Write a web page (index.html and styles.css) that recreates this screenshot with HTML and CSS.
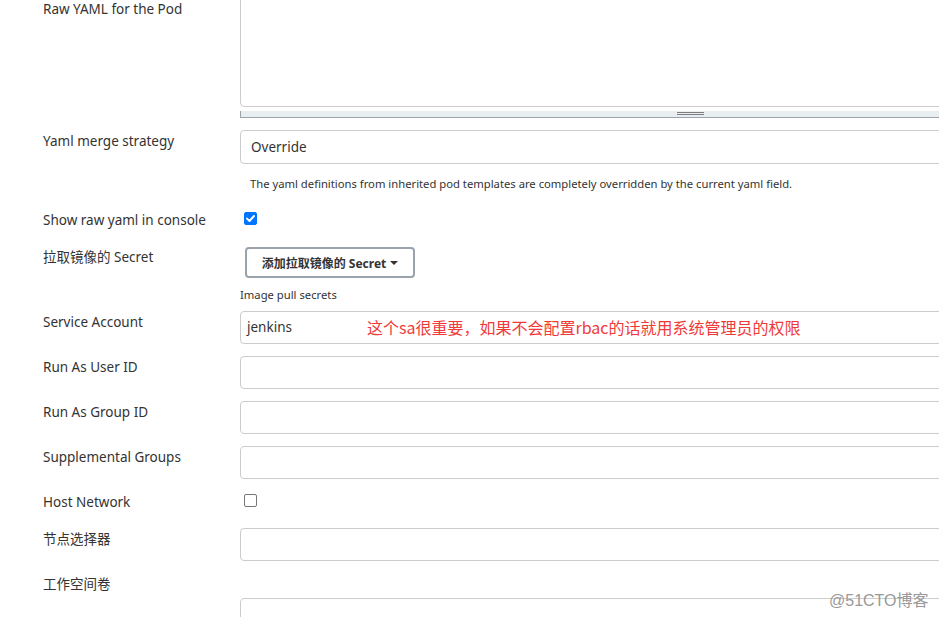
FILE: index.html
```html
<!DOCTYPE html>
<html>
<head>
<meta charset="utf-8">
<link rel="stylesheet" href="styles.css">
</head>
<body>
<div class="form">
  <div class="row row-yaml">
    <div class="label">Raw YAML for the Pod</div>
    <div class="field">
      <div class="ta-clip"><div class="textarea"></div></div>
      <div class="grip"><span class="grip-lines"></span></div>
    </div>
  </div>

  <div class="row row-select">
    <div class="label">Yaml merge strategy</div>
    <div class="field">
      <div class="input select">Override</div>
      <div class="help">The yaml definitions from inherited pod templates are completely overridden by the current yaml field.</div>
    </div>
  </div>

  <div class="row row-check">
    <div class="label">Show raw yaml in console</div>
    <div class="field"><span class="checkbox checked"><svg viewBox="0 0 13 13" width="13" height="13"><path d="M3 6.6 L5.5 9 L10 4" fill="none" stroke="#fff" stroke-width="2" stroke-linecap="round" stroke-linejoin="round"/></svg></span></div>
  </div>

  <div class="row row-secret">
    <div class="label">拉取镜像的 Secret</div>
    <div class="field">
      <div class="btn">添加拉取镜像的 Secret <span class="caret"></span></div>
      <div class="help help-pull">Image pull secrets</div>
    </div>
  </div>

  <div class="row">
    <div class="label">Service Account</div>
    <div class="field"><div class="input">jenkins<span class="note">这个sa很重要，如果不会配置rbac的话就用系统管理员的权限</span></div></div>
  </div>

  <div class="row">
    <div class="label">Run As User ID</div>
    <div class="field"><div class="input"></div></div>
  </div>

  <div class="row">
    <div class="label">Run As Group ID</div>
    <div class="field"><div class="input"></div></div>
  </div>

  <div class="row">
    <div class="label">Supplemental Groups</div>
    <div class="field"><div class="input"></div></div>
  </div>

  <div class="row row-host">
    <div class="label">Host Network</div>
    <div class="field"><span class="checkbox"></span></div>
  </div>

  <div class="row">
    <div class="label">节点选择器</div>
    <div class="field"><div class="input"></div></div>
  </div>

  <div class="row row-last">
    <div class="label">工作空间卷</div>
    <div class="field"><div class="input input-last"></div></div>
  </div>
</div>
<div class="watermark">@51CTO博客</div>
</body>
</html>
```

FILE: styles.css
```css
html, body {
  margin: 0;
  padding: 0;
  background: #fff;
  overflow: hidden;
  height: 617px;
}
body {
  font-family: "Noto Sans", "Noto Sans CJK SC", sans-serif;
  font-size: 13.5px;
  color: #333;
  position: relative;
}
.form {
  padding-left: 43px;
  display: flex;
  flex-direction: column;
}
.row {
  display: flex;
  align-items: flex-start;
  margin-bottom: 12px;
}
.label {
  width: 197px;
  flex: none;
  line-height: 18px;
  padding-top: 2px;
  color: #333;
}
.field {
  flex: none;
  width: 720px;
}
.row-yaml { margin-bottom: 12px; }
.row-yaml .label { padding-top: 0; }
.ta-clip {
  height: 107px;
  overflow: hidden;
  display: flex;
  flex-direction: column;
  justify-content: flex-end;
}
.textarea {
  height: 140px;
  flex: none;
  border: 1px solid #ccc;
  border-radius: 4px;
  box-sizing: border-box;
}
.grip {
  margin-top: 4px;
  height: 6px;
  background: #e9eef0;
  border-left: 1px solid #9aa5ab;
  border-bottom: 1px solid #9aa5ab;
  position: relative;
}
.grip-lines {
  position: absolute;
  left: 436px;
  top: 1px;
  width: 27px;
  height: 1px;
  border-top: 1px solid #7d7d7d;
  border-bottom: 1px solid #7d7d7d;
}
.input {
  height: 33px;
  box-sizing: border-box;
  border: 1px solid #ccc;
  border-radius: 4px;
  padding: 0 6px;
  line-height: 31px;
  font-size: 13.5px;
  color: #333;
  display: flex;
  align-items: center;
}
.select {
  height: 34px;
  padding-left: 10px;
}
.row-select { margin-bottom: 0; }
.help {
  font-size: 11.25px;
  color: #333;
  padding-left: 10px;
  line-height: 16px;
  margin-top: 12px;
  margin-bottom: 14px;
}
.row-check { margin-bottom: 0; }
.row-check .label { padding-top: 5px; }
.row-check .field { padding-top: 6px; height: 24px; padding-left: 4px; box-sizing: border-box; }
.checkbox {
  display: block;
  width: 13px;
  height: 13px;
  box-sizing: border-box;
  border: 1px solid #767676;
  border-radius: 2px;
  background: #fff;
}
.checkbox.checked {
  background: #0075ff;
  border-color: #0075ff;
}
.checkbox svg { display: block; margin: -1px; }
.row-secret { margin-top: 17px; margin-bottom: 8px; }
.row-secret .label { padding-top: 1px; }
.btn {
  margin-left: 5px;
  width: 170px;
  height: 31px;
  box-sizing: border-box;
  border: 2px solid #9aa3ab;
  border-radius: 4px;
  font-size: 12px;
  font-weight: bold;
  color: #333;
  display: flex;
  align-items: center;
  justify-content: center;
  gap: 4px;
}
.caret {
  display: inline-block;
  width: 0;
  height: 0;
  border-left: 4px solid transparent;
  border-right: 4px solid transparent;
  border-top: 4px solid #333;
  margin-left: 0;
}
.help-pull {
  padding-left: 0;
  margin-top: 9px;
  margin-bottom: 0;
}
.note {
  margin-left: 75px;
  color: #f03a3a;
  font-size: 16px;
  font-family: "Noto Sans CJK SC", sans-serif;
}
.row-host { margin-bottom: 13px; }
.row-host .field { padding-top: 3px; padding-left: 4px; box-sizing: border-box; height: 24px; }
.row-last .field { padding-top: 25px; }
.watermark {
  position: absolute;
  left: 829px;
  top: 587px;
  font-size: 16px;
  color: #999;
  font-family: "Liberation Sans", "Noto Sans CJK SC", sans-serif;
}
```
